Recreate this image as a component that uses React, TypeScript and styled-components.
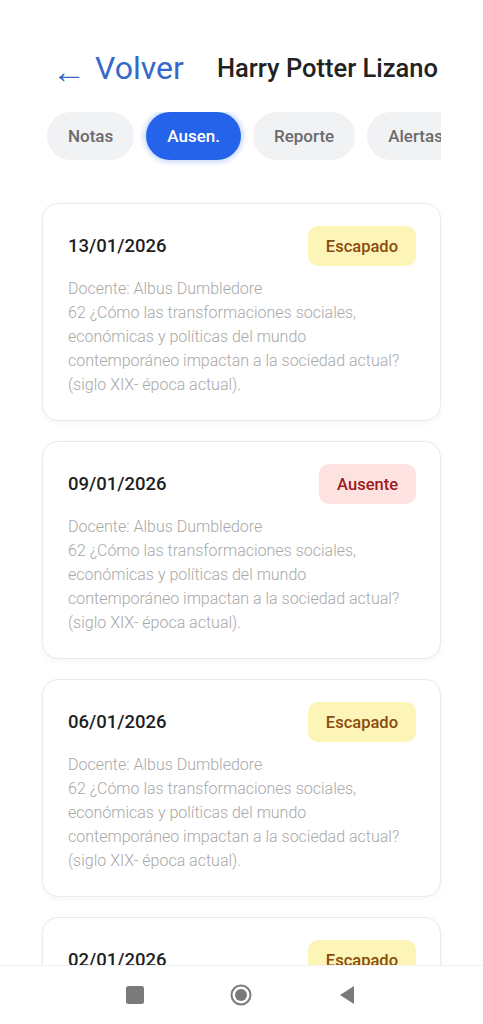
import React from 'react';
import styled, { createGlobalStyle } from 'styled-components';

type Estado = 'Escapado' | 'Ausente';

interface Ausencia {
  fecha: string;
  estado: Estado;
  docente: string;
  tema: string;
}

const DESCRIPCION =
  '62 ¿Cómo las transformaciones sociales, económicas y políticas del mundo contemporáneo impactan a la sociedad actual? (siglo XIX- época actual).';

const ausencias: Ausencia[] = [
  { fecha: '13/01/2026', estado: 'Escapado', docente: 'Albus Dumbledore', tema: DESCRIPCION },
  { fecha: '09/01/2026', estado: 'Ausente', docente: 'Albus Dumbledore', tema: DESCRIPCION },
  { fecha: '06/01/2026', estado: 'Escapado', docente: 'Albus Dumbledore', tema: DESCRIPCION },
  { fecha: '02/01/2026', estado: 'Escapado', docente: 'Albus Dumbledore', tema: DESCRIPCION },
];

const tabs = ['Notas', 'Ausen.', 'Reporte', 'Alertas'];

const GlobalStyle = createGlobalStyle`
  html, body {
    margin: 0;
    padding: 0;
    background: #ffffff;
    font-family: Roboto, "Noto Sans", Arial, sans-serif;
  }
`;

const Screen = styled.div`
  width: 483px;
  height: 1024px;
  display: flex;
  flex-direction: column;
  overflow: hidden;
  background: #ffffff;
`;

const Scroll = styled.div`
  flex: 1;
  overflow: hidden;
  padding: 44px 42px 0 42px;
`;

const Header = styled.div`
  display: flex;
  align-items: center;
  justify-content: space-between;
  padding: 0 3px 0 10px;
  height: 48px;
`;

const BackButton = styled.button`
  border: none;
  background: none;
  padding: 0;
  font-family: inherit;
  font-size: 32px;
  font-weight: 400;
  color: #3569c9;
  cursor: pointer;
  display: flex;
  align-items: center;
  gap: 9px;
`;

const Arrow = styled.span`
  font-size: 34px;
  margin-top: 6px;
`;

const StudentName = styled.h1`
  margin: 0;
  font-size: 25.5px;
  font-weight: 500;
  color: #222222;
`;

const TabsRow = styled.div`
  display: flex;
  gap: 12px;
  margin-top: 20px;
  padding: 0 0 6px 5px;
  margin-bottom: -2px;
  overflow: hidden;
`;

const Tab = styled.button<{ $active?: boolean }>`
  flex: none;
  height: 48px;
  padding: 0 21px;
  border: none;
  border-radius: 24px;
  font-family: inherit;
  font-size: 17px;
  font-weight: 500;
  background: ${p => (p.$active ? '#2563eb' : '#f1f2f4')};
  color: ${p => (p.$active ? '#ffffff' : '#6b6b6b')};
  box-shadow: ${p => (p.$active ? '0 0 4px 3px rgba(37, 99, 235, 0.2)' : 'none')};
`;

const List = styled.div`
  display: flex;
  flex-direction: column;
  gap: 20px;
  margin-top: 39px;
`;

const Card = styled.div`
  border: 1px solid #e9eaec;
  border-radius: 16px;
  padding: 22px 24px 23px 25px;
  box-shadow: 0 2px 6px rgba(0, 0, 0, 0.04);
  background: #ffffff;
`;

const CardTop = styled.div`
  display: flex;
  align-items: center;
  justify-content: space-between;
`;

const Fecha = styled.div`
  font-size: 18.5px;
  font-weight: 500;
  color: #1f1f1f;
`;

const Badge = styled.span<{ $estado: Estado }>`
  display: inline-flex;
  align-items: center;
  height: 40px;
  padding: 0 18px;
  border-radius: 10px;
  font-size: 16.5px;
  font-weight: 500;
  background: ${p => (p.$estado === 'Ausente' ? '#fde2e2' : '#fdf4b8')};
  color: ${p => (p.$estado === 'Ausente' ? '#9b1c1c' : '#8a4b0f')};
`;

const Detalle = styled.div`
  margin-top: 11px;
  font-size: 16px;
  font-weight: 300;
  line-height: 24px;
  color: #a8a8a8;
`;

const NavBar = styled.div`
  height: 58px;
  flex: none;
  border-top: 1px solid #f0f0f0;
  background: #ffffff;
  display: flex;
  align-items: center;
  justify-content: center;
  gap: 84px;
  padding-right: 2px;
`;

const NavIcon = styled.svg`
  width: 22px;
  height: 22px;
  fill: #7a7a7a;
`;

export default function App() {
  return (
    <Screen>
      <GlobalStyle />
      <Scroll>
        <Header>
          <BackButton>
            <Arrow>←</Arrow>
            Volver
          </BackButton>
          <StudentName>Harry Potter Lizano</StudentName>
        </Header>
        <TabsRow>
          {tabs.map(t => (
            <Tab key={t} $active={t === 'Ausen.'}>
              {t}
            </Tab>
          ))}
        </TabsRow>
        <List>
          {ausencias.map((a, i) => (
            <Card key={i}>
              <CardTop>
                <Fecha>{a.fecha}</Fecha>
                <Badge $estado={a.estado}>{a.estado}</Badge>
              </CardTop>
              <Detalle>
                Docente: {a.docente}
                <br />
                {a.tema}
              </Detalle>
            </Card>
          ))}
        </List>
      </Scroll>
      <NavBar>
        <NavIcon viewBox="0 0 22 22">
          <rect x="2" y="2" width="18" height="18" rx="2.5" />
        </NavIcon>
        <NavIcon viewBox="0 0 22 22">
          <circle cx="11" cy="11" r="9.5" fill="none" stroke="#7a7a7a" strokeWidth="2" />
          <circle cx="11" cy="11" r="6" />
        </NavIcon>
        <NavIcon viewBox="0 0 22 22">
          <path d="M18 2 L18 20 L4 11 Z" />
        </NavIcon>
      </NavBar>
    </Screen>
  );
}
